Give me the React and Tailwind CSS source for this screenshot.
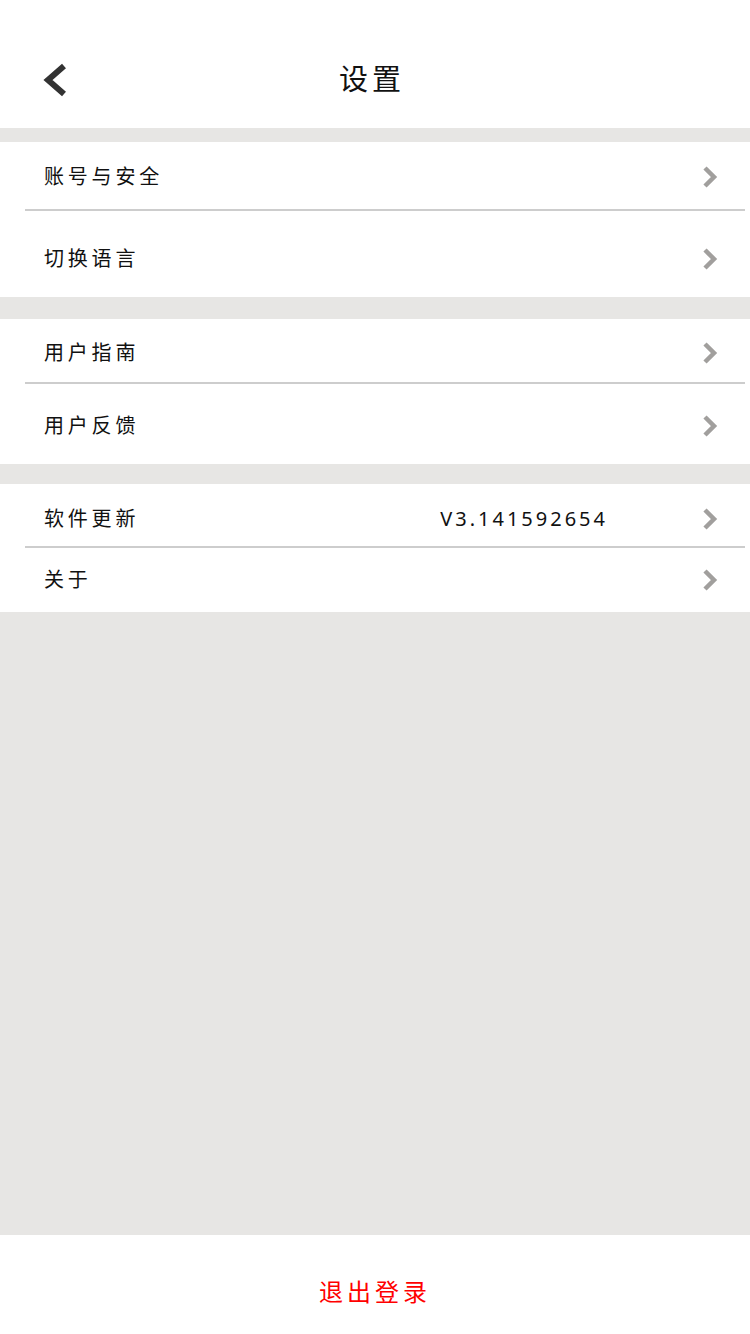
const Chevron = () => (
  <svg width="16" height="22" viewBox="0 0 16 22" className="shrink-0">
    <path d="M3 2 L12 11 L3 20" fill="none" stroke="#a19f9d" strokeWidth="4.5" strokeLinejoin="miter" />
  </svg>
);

const Row = ({ label, value, height, divider }) => (
  <div className="flex flex-col">
    <div className={`flex items-center pl-[44px] pr-[32px] ${height}`}>
      <span className="text-[20px] tracking-[3.8px] text-[#111]">{label}</span>
      <span className="flex-1" />
      {value && <span className="mr-[94px] text-[20px] tracking-[3px] text-[#111]">{value}</span>}
      <Chevron />
    </div>
    {divider && <div className="ml-[25px] mr-[5px] h-[2px] bg-[#cdcdcd]" />}
  </div>
);

export default function App() {
  return (
    <div
      className="flex h-[1334px] w-[750px] flex-col bg-[#e7e6e4]"
      style={{ fontFamily: '"Noto Sans", "Noto Sans CJK SC", sans-serif' }}
    >
      <header className="relative flex h-[128px] items-center justify-center bg-white">
        <svg width="30" height="34" viewBox="0 0 30 34" className="absolute left-[40px] top-[63px]">
          <path d="M24 3 L8 17 L24 31" fill="none" stroke="#333" strokeWidth="6" strokeLinejoin="miter" />
        </svg>
        <h1 className="mt-[30px] pr-[6px] text-[29px] tracking-[4px] text-[#111]">设置</h1>
      </header>

      <div className="mt-[14px] bg-white">
        <Row label="账号与安全" height="h-[67px] pt-[2px]" divider />
        <Row label="切换语言" height="h-[86px] pt-[10px]" />
      </div>

      <div className="mt-[22px] bg-white">
        <Row label="用户指南" height="h-[63px] pt-[4px]" divider />
        <Row label="用户反馈" height="h-[80px] pt-[4px]" />
      </div>

      <div className="mt-[20px] bg-white">
        <Row label="软件更新" value="V3.141592654" height="h-[62px] pt-[8px]" divider />
        <Row label="关于" height="h-[64px] pt-[0px]" />
      </div>

      <div className="flex-1" />

      <footer className="flex h-[99px] items-center justify-center bg-white">
        <button className="pt-[14px] text-[24px] tracking-[4px] text-[#f00]">退出登录</button>
      </footer>
    </div>
  );
}
